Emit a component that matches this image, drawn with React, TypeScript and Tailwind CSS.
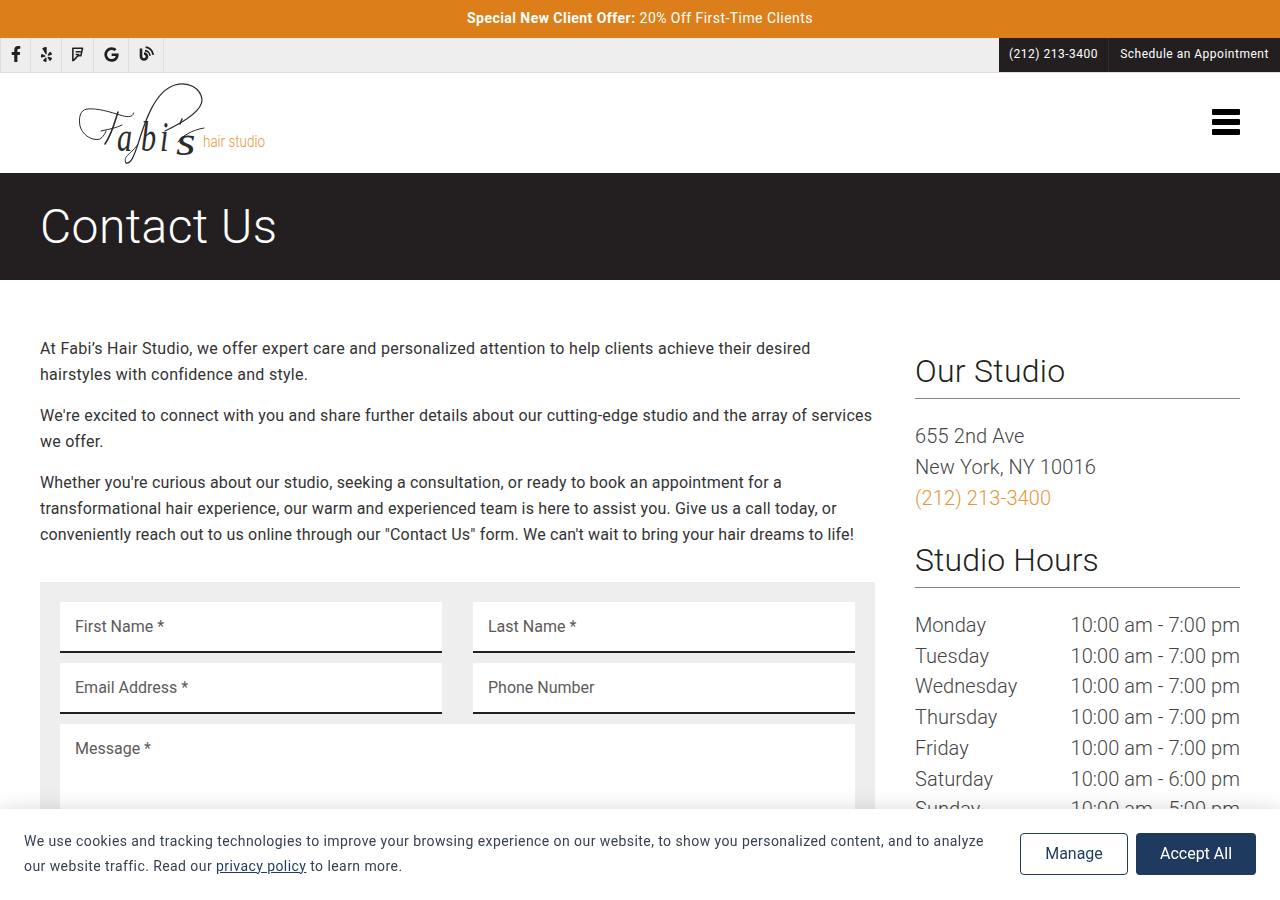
import { FaFacebookF, FaYelp, FaGoogle } from "react-icons/fa";

const font = { fontFamily: "Roboto, sans-serif" };

function BlogIcon() {
  return (
    <svg viewBox="0 0 16 16" className="w-[16px] h-[16px]" fill="none" stroke="#231f20">
      <path d="M3 2.5 V10.5 a3 3 0 1 0 3 -3" strokeWidth="2.6" />
      <path d="M7 4.6 a5.5 5.5 0 0 1 5 5.2" strokeWidth="1.7" />
      <path d="M7.6 1.2 a8.5 8.5 0 0 1 7.6 7.6" strokeWidth="1.7" />
    </svg>
  );
}

function SquareIcon() {
  return (
    <svg viewBox="0 0 14 16" className="w-[13px] h-[15px]" fill="none" stroke="#231f20">
      <path d="M2 1.2 H12.4 L10.6 9.4 H7.4 L3.4 13.8 L2 14.6 Z" strokeWidth="1.7" strokeLinejoin="round" />
      <path d="M5 5 H10.6 M5 8 H9" strokeWidth="1.5" />
    </svg>
  );
}

function Logo() {
  const serif = "'Liberation Serif', serif";
  return (
    <svg viewBox="0 0 205 94" className="w-[205px] h-[94px]" aria-label="Fabi's hair studio">
      <g fill="none" stroke="#2b2b2b" strokeWidth="1" strokeLinecap="round">
        <path d="M63.5 37 C63 42 56 41 50 39 C40 36 28 32 17 33 C10 34 8.5 42 10 50 C12 58 20 64 28 63.5 C32 63 35 58 36 55" />
        <path d="M48 36 C45 45 42 58 35 68" strokeWidth="1.6" />
        <path d="M31 55 C40 53 46 52 52 49" />
        <path d="M56 87 C61 88 64 80 68 68 C75 45 85 15 105 9 C118 5 131 12 132 24 C132 34 118 44 95 55" strokeWidth="1.2" />
        <path d="M68 68 C62 78 52 80 56 87" />
        <path d="M134 52 C122 54 112 60 108 66" />
        <path d="M112 43 L110 48" strokeWidth="1.5" />
      </g>
      <g fontFamily={serif} fontStyle="italic" fontSize="42" fill="#2b2b2b">
        <text transform="translate(47 75) scale(0.72 1)">a</text>
        <text transform="translate(71 75) scale(0.72 1)">b</text>
        <text transform="translate(90 75) scale(0.72 1)">i</text>
        <text transform="translate(106 79) scale(1.2 1)">s</text>
      </g>
      <text x="133" y="71" fontFamily="Roboto, sans-serif" fontSize="16" fill="#e8963a" fontWeight="300" textLength="62" lengthAdjust="spacingAndGlyphs">hair studio</text>
    </svg>
  );
}

function Field({ label }: { label: string }) {
  return (
    <div className="h-[51px] bg-white border-b-2 border-[#231f20] pl-[15px] pt-[15px] text-[16px] leading-[20px] text-[#5e5a5a]">{label}</div>
  );
}

const hours = [
  ["Monday", "10:00 am - 7:00 pm"],
  ["Tuesday", "10:00 am - 7:00 pm"],
  ["Wednesday", "10:00 am - 7:00 pm"],
  ["Thursday", "10:00 am - 7:00 pm"],
  ["Friday", "10:00 am - 7:00 pm"],
  ["Saturday", "10:00 am - 6:00 pm"],
  ["Sunday", "10:00 am - 5:00 pm"],
];

export default function App() {
  return (
    <div style={font} className="bg-white text-[#333]">
      <div className="h-[38px] pb-[2px] bg-[#dc7f1b] flex items-center justify-center text-white text-[14px] tracking-[0.45px]">
        <b className="font-bold mr-1">Special New Client Offer:</b> 20% Off First-Time Clients
      </div>
      <div className="h-[35px] bg-[#eeeeee] border-b border-[#dddddd] flex justify-between">
        <div className="flex">
          {[
            [<FaFacebookF size={16} />, "w-[31px]"],
            [<FaYelp size={15} />, "w-[31px]"],
            [<SquareIcon />, "w-[32px]"],
            [<FaGoogle size={15} />, "w-[35px]"],
            [<BlogIcon />, "w-[35px]"],
          ].map(([icon, w], i) => (
            <div key={i} className={`${w} pb-[2px] border-r border-[#dddddd] ${i === 0 ? "border-l" : ""} flex items-center justify-center text-[#231f20]`}>{icon}</div>
          ))}
        </div>
        <div className="flex bg-[#231f20] text-white text-[12px] tracking-[0.5px] h-[34px] items-center">
          <div className="w-[110px] h-full pb-[2px] flex items-center justify-center border-r border-[#312d2e]">(212) 213-3400</div>
          <div className="w-[171px] h-full pb-[2px] flex items-center justify-center">Schedule an Appointment</div>
        </div>
      </div>
      <div className="h-[100px] flex justify-between pl-[70px] pr-[40px]">
        <div className="mt-[3px]"><Logo /></div>
        <div className="w-[28px] mt-[36px] flex flex-col gap-[4px]">
          <div className="h-[6px] bg-black rounded-[1px]" />
          <div className="h-[6px] bg-black rounded-[1px]" />
          <div className="h-[6px] bg-black rounded-[1px]" />
        </div>
      </div>
      <div className="h-[107px] bg-[#231f20] flex items-center px-[40px]">
        <h1 className="text-[48px] font-light text-white leading-none tracking-[0.4px]">Contact Us</h1>
      </div>
      <div className="flex gap-[40px] px-[40px] pt-[56px] pb-[60px]">
        <div className="w-[835px]">
          <div className="text-[16px] leading-[25.6px] text-[#333] flex flex-col gap-[16px]">
            <p className="tracking-[0.29px]">At Fabi’s Hair Studio, we offer expert care and personalized attention to help clients achieve their desired hairstyles with confidence and style.</p>
            <p className="tracking-[0.23px]">We're excited to connect with you and share further details about our cutting-edge studio and the array of services we offer.</p>
            <p className="tracking-[0.17px]">Whether you're curious about our studio, seeking a consultation, or ready to book an appointment for a transformational hair experience, our warm and experienced team is here to assist you. Give us a call today, or conveniently reach out to us online through our "Contact Us" form. We can't wait to bring your hair dreams to life!</p>
          </div>
          <div className="mt-[35px] bg-[#eeeeee] p-[20px]">
            <div className="grid grid-cols-2 gap-x-[31px] gap-y-[10px]">
              <Field label="First Name *" />
              <Field label="Last Name *" />
              <Field label="Email Address *" />
              <Field label="Phone Number" />
              <div className="col-span-2 h-[150px] bg-white border-b-2 border-[#231f20] pl-[15px] pt-[15px] text-[16px] leading-[20px] text-[#5e5a5a]">Message *</div>
            </div>
          </div>
        </div>
        <div className="w-[325px] pt-[13px] font-light">
          <h2 className="text-[32px] leading-[44px] tracking-[0.3px] text-[#231f20] font-light pb-[5px] border-b border-[#8c7f86]">Our Studio</h2>
          <div className="mt-[22px] text-[20px] leading-[31px] tracking-[0.13px] text-[#444]">
            <div>655 2nd Ave</div>
            <div>New York, NY 10016</div>
            <div className="text-[#e8963a]">(212) 213-3400</div>
          </div>
          <h2 className="mt-[24px] text-[32px] leading-[44px] tracking-[0.1px] text-[#231f20] font-light pb-[5px] border-b border-[#8c7f86]">Studio Hours</h2>
          <div className="mt-[22px] text-[20px] leading-[30.7px] tracking-[0.05px] text-[#444]">
            {hours.map(([d, h]) => (
              <div key={d} className="flex justify-between">
                <span>{d}</span>
                <span>{h}</span>
              </div>
            ))}
          </div>
        </div>
      </div>
      <div className="fixed left-0 right-0 bottom-0 h-[91px] pb-[2px] bg-white shadow-[0_0_20px_rgba(0,0,0,0.15)] flex items-center justify-between px-[24px]">
        <p className="w-[975px] text-[14px] leading-[25px] tracking-[0.43px] text-[#374151]">
          We use cookies and tracking technologies to improve your browsing experience on our website, to show you personalized content, and to analyze our website traffic. Read our <a className="underline text-[#1e3a5f]">privacy policy</a> to learn more.
        </p>
        <div className="flex gap-[8px]">
          <button className="w-[108px] h-[42px] rounded-[4px] border border-[#1e3a5f] text-[#1e3a5f] text-[16px]">Manage</button>
          <button className="w-[120px] h-[42px] rounded-[4px] bg-[#1e3a5f] text-white text-[16px]">Accept All</button>
        </div>
      </div>
    </div>
  );
}
